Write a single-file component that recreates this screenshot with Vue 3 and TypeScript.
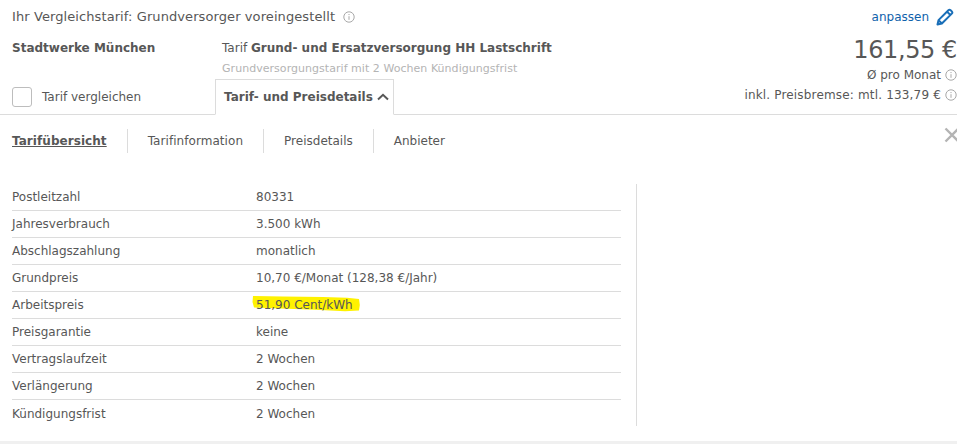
<script setup lang="ts">
interface DetailRow {
  label: string;
  value: string;
  marked?: boolean;
}

const navItems = ['Tarifübersicht', 'Tarifinformation', 'Preisdetails', 'Anbieter'];

const rows: DetailRow[] = [
  { label: 'Postleitzahl', value: '80331' },
  { label: 'Jahresverbrauch', value: '3.500 kWh' },
  { label: 'Abschlagszahlung', value: 'monatlich' },
  { label: 'Grundpreis', value: '10,70 €/Monat (128,38 €/Jahr)' },
  { label: 'Arbeitspreis', value: '51,90 Cent/kWh', marked: true },
  { label: 'Preisgarantie', value: 'keine' },
  { label: 'Vertragslaufzeit', value: '2 Wochen' },
  { label: 'Verlängerung', value: '2 Wochen' },
  { label: 'Kündigungsfrist', value: '2 Wochen' },
];
</script>

<template>
  <div class="page">
    <header class="head">
      <div class="head__top">
        <span class="head__title">
          Ihr Vergleichstarif: Grundversorger voreingestellt
          <svg class="info info--title" viewBox="0 0 12 12" aria-hidden="true">
            <circle cx="6" cy="6" r="5.2" />
            <path d="M6 5.2v3.6M6 3v1.1" />
          </svg>
        </span>
        <span class="head__edit">
          anpassen
          <svg class="pencil" viewBox="0 0 18 18" aria-hidden="true">
            <path d="M1.5 16.5l1-4.4L12.4 2.2a1.6 1.6 0 0 1 2.2 0l1.2 1.2a1.6 1.6 0 0 1 0 2.2L5.9 15.5zM2.5 12.1l3.4 3.4M11 3.6l3.4 3.4" />
          </svg>
        </span>
      </div>

      <div class="head__body">
        <strong class="head__provider">Stadtwerke München</strong>
        <div class="head__tariff">
          <p class="head__name">Tarif <b>Grund- und Ersatzversorgung HH Lastschrift</b></p>
          <p class="head__note">Grundversorgungstarif mit 2 Wochen Kündigungsfrist</p>
        </div>
        <div class="head__price">
          <div class="head__amount">161,55 €</div>
          <div class="head__sub">
            Ø pro Monat
            <svg class="info" viewBox="0 0 12 12" aria-hidden="true">
              <circle cx="6" cy="6" r="5.2" />
              <path d="M6 5.2v3.6M6 3v1.1" />
            </svg>
          </div>
        </div>
      </div>

      <div class="head__bottom">
        <label class="check">
          <span class="check__box"></span>
          Tarif vergleichen
        </label>
        <div class="tab">
          Tarif- und Preisdetails
          <svg class="chevron" viewBox="0 0 12 8" aria-hidden="true">
            <path d="M1 6.5L6 1.8l5 4.7" />
          </svg>
        </div>
        <div class="head__brake">
          inkl. Preisbremse: mtl. 133,79 €
          <svg class="info" viewBox="0 0 12 12" aria-hidden="true">
            <circle cx="6" cy="6" r="5.2" />
            <path d="M6 5.2v3.6M6 3v1.1" />
          </svg>
        </div>
      </div>
    </header>

    <nav class="nav">
      <span
        v-for="(item, index) in navItems"
        :key="item"
        class="nav__item"
        :class="{ 'nav__item--active': index === 0 }"
      >
        {{ item }}
      </span>
      <svg class="close" viewBox="0 0 16 16" aria-hidden="true">
        <path d="M1.5 1.5l13 13M14.5 1.5l-13 13" />
      </svg>
    </nav>

    <section class="details">
      <div class="details__table">
        <div v-for="row in rows" :key="row.label" class="row">
          <span>{{ row.label }}</span>
          <span class="row__value">
            <span :class="{ 'row__mark': row.marked }">
              <svg v-if="row.marked" class="row__ink" viewBox="0 0 108 18" aria-hidden="true">
                <path d="M1 2l30 .5 40 .5 24 .8 12 1.2.8 6-.8 5.5-14 .8-30-1.5-35-1.3L2 13.5.5 8z" />
              </svg>
              <span class="row__text">{{ row.value }}</span>
            </span>
          </span>
        </div>
      </div>
    </section>

    <div class="foot"></div>
  </div>
</template>

<style>
html,
body {
  margin: 0;
  background: #fff;
}
</style>

<style scoped>
.page {
  position: relative;
  width: 957px;
  height: 444px;
  overflow: hidden;
  background: #fff;
  color: #575757;
  font-family: "DejaVu Sans", Verdana, sans-serif;
  font-size: 12px;
  line-height: 16px;
}

.head {
  height: 115px;
  box-sizing: border-box;
  border-bottom: 1px solid #dcdcdc;
}

.head__top {
  display: flex;
  justify-content: space-between;
  height: 34px;
  padding: 9px 3px 0 12px;
  box-sizing: border-box;
}

.head__title {
  display: flex;
  align-items: center;
  gap: 8px;
  height: 16px;
  font-size: 13px;
  letter-spacing: 0.09px;
  white-space: nowrap;
}

.head__edit {
  display: flex;
  align-items: center;
  gap: 7px;
  height: 16px;
  color: #0f62ab;
}

.pencil {
  width: 18px;
  height: 18px;
  fill: none;
  stroke: #1a6fb8;
  stroke-width: 2;
  stroke-linejoin: round;
}

.head__body {
  display: grid;
  grid-template-columns: 210px 1fr auto;
  height: 45px;
  padding: 0 0 0 12px;
}

.head__provider {
  padding-top: 6px;
  font-weight: 700;
}

.head__name {
  margin: 6px 0 0;
}

.head__note {
  margin: 6px 0 0;
  color: #b4b4b4;
  font-size: 11px;
  line-height: 14px;
  letter-spacing: 0.04px;
}

.head__price {
  display: flex;
  flex-direction: column;
  align-items: flex-end;
}

.head__amount {
  height: 33px;
  font-size: 24px;
  line-height: 32px;
  letter-spacing: -0.4px;
}

.head__sub {
  display: flex;
  align-items: center;
  gap: 4px;
  height: 16px;
}

.head__bottom {
  display: flex;
  align-items: flex-end;
  height: 35px;
  padding-left: 12px;
}

.check {
  display: flex;
  align-items: center;
  gap: 10px;
  width: 203px;
  height: 35px;
}

.check__box {
  width: 18px;
  height: 18px;
  border: 1px solid #bdbdbd;
  border-radius: 3px;
}

.tab {
  position: relative;
  z-index: 1;
  display: flex;
  align-items: center;
  gap: 4px;
  height: 36px;
  margin-bottom: -1px;
  padding: 0 4px 0 8px;
  box-sizing: border-box;
  border: 1px solid #dcdcdc;
  border-bottom-color: #fff;
  background: #fff;
  font-weight: 700;
}

.chevron {
  width: 12px;
  height: 8px;
  fill: none;
  stroke: #575757;
  stroke-width: 2;
}

.head__brake {
  display: flex;
  align-items: center;
  gap: 4px;
  height: 35px;
  margin-left: auto;
  padding-bottom: 4px;
  box-sizing: border-box;
  letter-spacing: 0.17px;
}

.info {
  flex-shrink: 0;
  width: 12px;
  height: 12px;
  fill: none;
  stroke: #a8a8a8;
  stroke-width: 1;
}

.info--title {
  margin-top: -1px;
}

.nav {
  position: relative;
  display: flex;
  align-items: center;
  height: 24px;
  margin-top: 14px;
  padding-left: 12px;
}

.nav__item {
  display: flex;
  align-items: center;
  height: 24px;
  padding-right: 20px;
  margin-right: 20px;
  border-right: 1px solid #dcdcdc;
}

.nav__item:nth-of-type(-n + 2) {
  letter-spacing: 0.06px;
}

.nav__item:last-of-type {
  border-right: 0;
}

.nav__item--active {
  font-weight: 700;
  text-decoration: underline;
}

.close {
  position: absolute;
  top: -2px;
  right: -3px;
  width: 16px;
  height: 16px;
  fill: none;
  stroke: #b4b4b4;
  stroke-width: 2.4;
}

.details {
  width: 637px;
  height: 242px;
  margin-top: 31px;
  padding-left: 12px;
  box-sizing: border-box;
  border-right: 1px solid #dcdcdc;
}

.details__table {
  width: 609px;
}

.row {
  display: grid;
  grid-template-columns: 244px 1fr;
  align-items: center;
  height: 27px;
  box-sizing: border-box;
  border-bottom: 1px solid #dcdcdc;
}

.row:last-child {
  border-bottom: 0;
}

.row__value {
  position: relative;
}

.row__ink {
  position: absolute;
  top: -3px;
  left: -4px;
  width: 108px;
  height: 18px;
  fill: #fff200;
}

.row__text {
  position: relative;
}

.foot {
  height: 3px;
  margin-top: 15px;
  background: #f0f0f0;
}
</style>
